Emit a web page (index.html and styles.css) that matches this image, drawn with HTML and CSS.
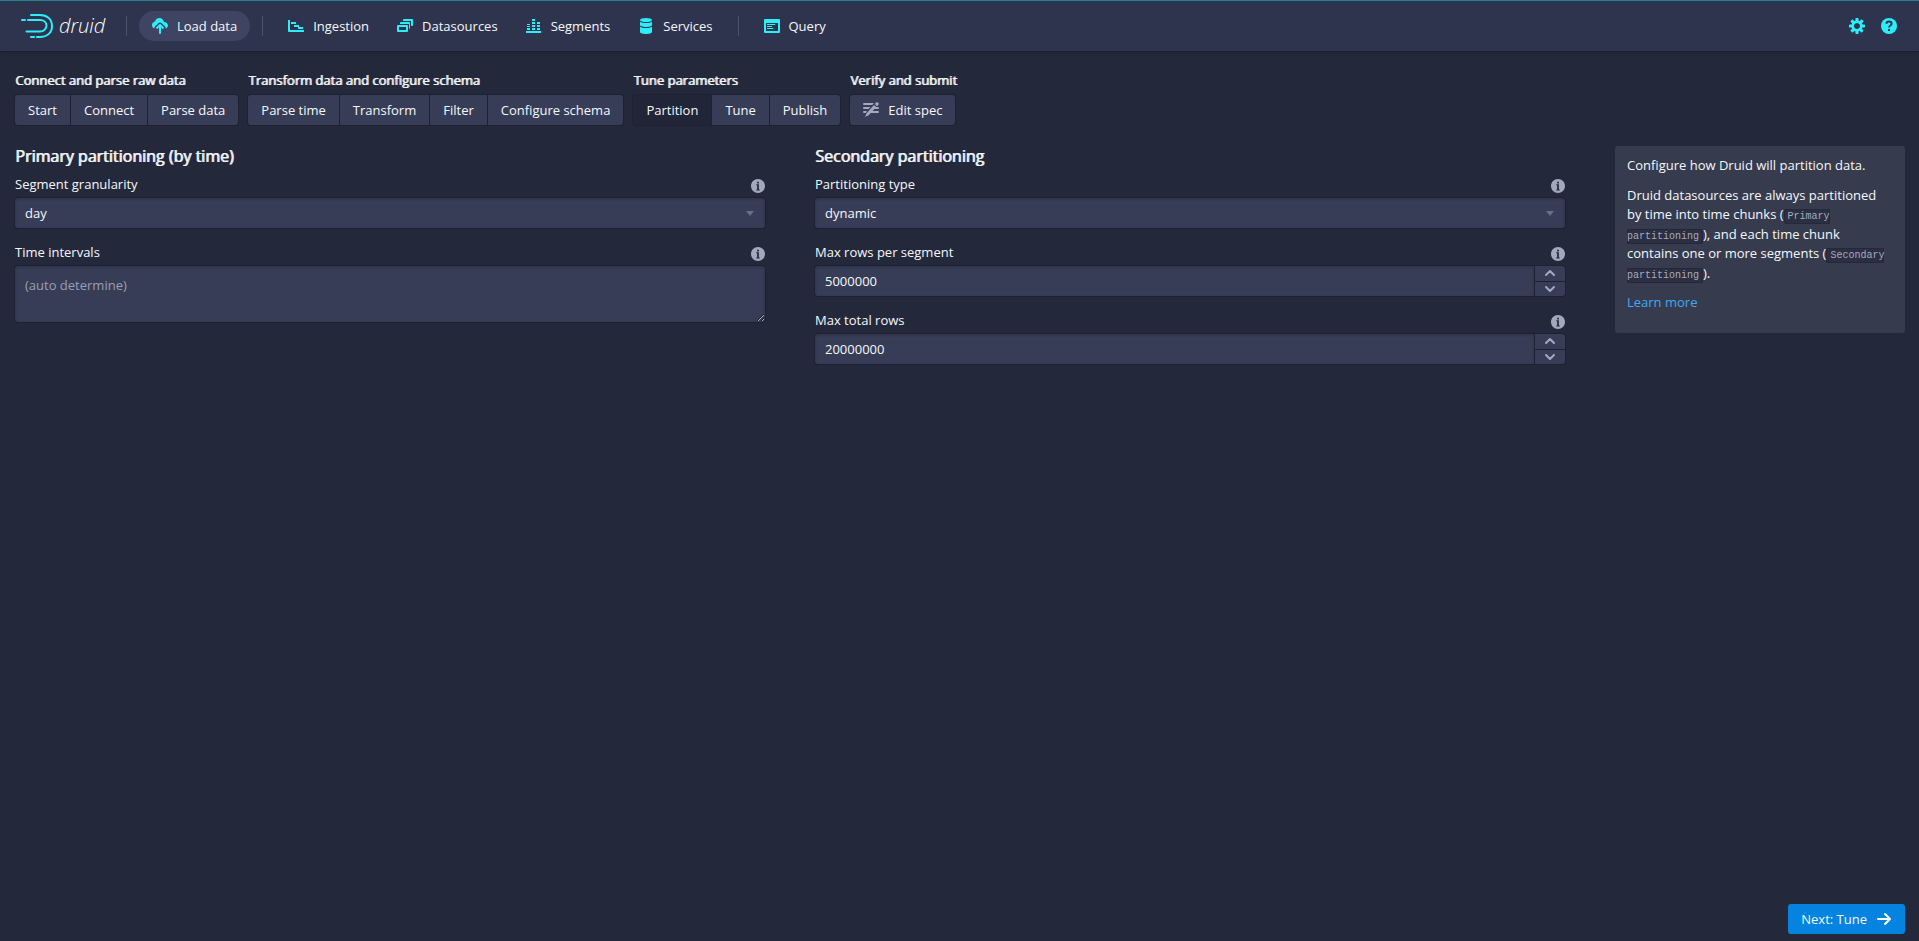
FILE: index.html
```html
<!DOCTYPE html>
<html lang="en">
<head>
<meta charset="utf-8">
<title>Apache Druid</title>
<link rel="stylesheet" href="styles.css">
</head>
<body>
<svg class="sprite" aria-hidden="true">
  <symbol id="info" viewBox="0 0 16 16"><path fill-rule="evenodd" d="M8 0C3.58 0 0 3.58 0 8s3.58 8 8 8 8-3.58 8-8-3.58-8-8-8zM7 3h2v2H7V3zm3 10H6v-1h1V7H6V6h3v6h1v1z"/></symbol>
  <symbol id="caret" viewBox="0 0 16 16"><path d="M4 6h8L8 11z"/></symbol>
  <symbol id="chev-up" viewBox="0 0 16 16"><path d="M4 10l4-4 4 4" fill="none" stroke="currentColor" stroke-width="2" stroke-linecap="round" stroke-linejoin="round"/></symbol>
  <symbol id="chev-down" viewBox="0 0 16 16"><path d="M4 6l4 4 4-4" fill="none" stroke="currentColor" stroke-width="2" stroke-linecap="round" stroke-linejoin="round"/></symbol>
</svg>

<header class="header">
  <a class="logo" href="#" aria-label="Druid home">
    <svg width="34" height="26" viewBox="0 0 34 26" fill="none" stroke="#2ceefb" stroke-width="2" stroke-linecap="round"><path d="M11 2h9c7 0 12 4 12 11s-5 11-12 11h-3M11 24h3M2 7h3M8 7h12c4 0 6.500 2.500 6.500 5.500s-2.500 6-6.500 6H6.500"/></svg>
    <span class="wordmark">druid</span>
  </a>
  <span class="divider"></span>
  <nav class="nav">
    <a class="nav-item current" href="#"><svg class="icon" viewBox="0 0 16 16"><path d="M8.700 6.300a1 1 0 0 0-1.400 0l-3 3a1 1 0 0 0 1.400 1.400L7 9.400V15a1 1 0 0 0 2 0V9.400l1.300 1.300a1 1 0 0 0 1.400-1.400z"/><path d="M12 4h-.100C11.500 1.700 9.900 0 7.500 0 5.200 0 3.400 1.500 3 3.600 1.300 4 0 5.400 0 7.200 0 8.700.9 9.900 2.200 10.500c0-.8.300-1.500.8-2l3-3a2.800 2.800 0 0 1 4 0l3 3c.5.500.8 1.200.8 1.900C15.100 9.900 16 9 16 7.800 16 5.700 14.200 4 12 4z"/></svg>Load data</a>
    <span class="divider"></span>
    <a class="nav-item" href="#"><svg class="icon" viewBox="0 0 16 16"><path d="M0 2h2v10h14v2H1a1 1 0 0 1-1-1zM3 4h5v2H3zM6 7h5v2H6zM10 9h5v2h-5z"/></svg>Ingestion</a>
    <a class="nav-item" href="#"><svg class="icon" viewBox="0 0 16 16"><path fill-rule="evenodd" d="M1 7h9a1 1 0 0 1 1 1v5a1 1 0 0 1-1 1H1a1 1 0 0 1-1-1V8a1 1 0 0 1 1-1zm1 2v3h7V9zM3 6V5a1 1 0 0 1 1-1h8a1 1 0 0 1 1 1v5a1 1 0 0 1-1 1V6zM6 3V2a1 1 0 0 1 1-1h8a1 1 0 0 1 1 1v5a1 1 0 0 1-1 1h-1V3z"/></svg>Datasources</a>
    <a class="nav-item" href="#"><svg class="icon" viewBox="0 0 16 16"><path d="M0 13h15v2H0zM1 10h3v2H1zM1 8h3v1H1zM1 6h3v1H1zM6 10h3v2H6zM6 7h3v2H6zM6 4h3v2H6zM6 1h3v2H6zM11 10h3v2h-3zM11 7h3v2h-3zM11 4h3v2h-3z"/></svg>Segments</a>
    <a class="nav-item" href="#"><svg class="icon" viewBox="0 0 16 16"><ellipse cx="8" cy="2" rx="6" ry="2"/><path d="M2 3.500C3 4.600 5.300 5 8 5s5-.4 6-1.500V7c0 1.100-2.700 2-6 2s-6-.9-6-2zM2 8.500C3 9.600 5.300 10 8 10s5-.4 6-1.500V14c0 1.100-2.700 2-6 2s-6-.9-6-2z"/></svg>Services</a>
    <span class="divider"></span>
    <a class="nav-item" href="#"><svg class="icon" viewBox="0 0 16 16"><path fill-rule="evenodd" d="M1 1h14a1 1 0 0 1 1 1v12a1 1 0 0 1-1 1H1a1 1 0 0 1-1-1V2a1 1 0 0 1 1-1zm1 4v8h12V5zM3 6h8v1H3zM3 8h5v1H3zM3 10h6v1H3z"/></svg>Query</a>
  </nav>
  <div class="header-tools">
    <button class="tool" aria-label="Settings"><svg class="icon" viewBox="0 0 16 16"><path d="M15.190 6.390h-1.850c-.11-.37-.27-.71-.45-1.040l1.360-1.360c.31-.31.31-.82 0-1.130l-1.130-1.130c-.31-.31-.82-.31-1.130 0l-1.360 1.360c-.33-.17-.67-.33-1.040-.44V.79c0-.44-.36-.8-.8-.8h-1.600c-.44 0-.8.36-.8.8v1.860c-.39.12-.75.28-1.100.47l-1.300-1.300c-.3-.3-.79-.3-1.090 0L1.820 2.910c-.3.3-.3.79 0 1.090l1.300 1.300c-.2.34-.36.7-.48 1.090H.79c-.44 0-.8.36-.8.8v1.600c0 .44.36.8.8.8h1.850c.11.37.27.71.45 1.040l-1.360 1.360c-.31.31-.31.82 0 1.130l1.130 1.130c.31.31.82.31 1.130 0l1.360-1.360c.33.18.67.33 1.040.44v1.860c0 .44.36.8.8.8h1.600c.44 0 .8-.36.8-.8v-1.860c.39-.12.75-.28 1.100-.47l1.300 1.300c.3.3.79.3 1.090 0l1.090-1.090c.3-.3.3-.79 0-1.090l-1.300-1.300c.19-.35.36-.71.48-1.100h1.850c.44 0 .8-.36.8-.8v-1.600a.816.816 0 0 0-.81-.79zm-7.200 4.600c-1.660 0-3-1.340-3-3s1.340-3 3-3 3 1.340 3 3-1.340 3-3 3z"/></svg></button>
    <button class="tool" aria-label="Help"><svg class="icon" viewBox="0 0 16 16"><circle cx="8" cy="8" r="8"/><path d="M5.500 5.800C5.500 4.300 6.600 3.500 8 3.500s2.600.8 2.600 2.200C10.600 7.400 8 7.600 8 9.600M8 11v2" fill="none" stroke="#2f344e" stroke-width="2"/></svg></button>
  </div>
</header>

<main class="loader">
  <div class="steps">
    <section class="step-group">
      <h2 class="step-title">Connect and parse raw data</h2>
      <div class="buttons"><button class="btn">Start</button><button class="btn">Connect</button><button class="btn">Parse data</button></div>
    </section>
    <section class="step-group">
      <h2 class="step-title">Transform data and configure schema</h2>
      <div class="buttons"><button class="btn">Parse time</button><button class="btn">Transform</button><button class="btn">Filter</button><button class="btn">Configure schema</button></div>
    </section>
    <section class="step-group">
      <h2 class="step-title">Tune parameters</h2>
      <div class="buttons"><button class="btn active">Partition</button><button class="btn">Tune</button><button class="btn">Publish</button></div>
    </section>
    <section class="step-group">
      <h2 class="step-title">Verify and submit</h2>
      <div class="buttons"><button class="btn"><svg class="icon muted" viewBox="0 0 16 16"><path d="M1 1h10L9.200 3H1a1 1 0 0 1 0-2zM1 5h6.500L5.700 7H1a1 1 0 0 1 0-2zM1 9h3l-1.200 2H1a1 1 0 0 1 0-2zM12.300 5H15a1 1 0 0 1 0 2h-4.500zM8.800 9H15a1 1 0 0 1 0 2H7zM3.600 11.300L11 3l2.200 2-7.500 8.300L2 15zM11.800 2.100l1.300-1.500c.5-.5 1.200-.5 1.700-.1l.6.5c.5.500.5 1.200 0 1.700L14 4.200z"/></svg>Edit spec</button></div>
    </section>
  </div>

  <div class="columns">
    <section class="column">
      <h2 class="heading">Primary partitioning (by time)</h2>
      <div class="field">
        <div class="label-row"><label for="gran">Segment granularity</label><button class="info" aria-label="About segment granularity"><svg><use href="#info"/></svg></button></div>
        <div class="select"><select class="control" id="gran"><option>day</option></select><svg class="caret"><use href="#caret"/></svg></div>
      </div>
      <div class="field">
        <div class="label-row"><label for="intervals">Time intervals</label><button class="info" aria-label="About time intervals"><svg><use href="#info"/></svg></button></div>
        <textarea class="control area" id="intervals" placeholder="(auto determine)"></textarea>
      </div>
    </section>

    <section class="column">
      <h2 class="heading">Secondary partitioning</h2>
      <div class="field">
        <div class="label-row"><label for="ptype">Partitioning type</label><button class="info" aria-label="About partitioning type"><svg><use href="#info"/></svg></button></div>
        <div class="select"><select class="control" id="ptype"><option>dynamic</option></select><svg class="caret"><use href="#caret"/></svg></div>
      </div>
      <div class="field">
        <div class="label-row"><label for="maxseg">Max rows per segment</label><button class="info" aria-label="About max rows per segment"><svg><use href="#info"/></svg></button></div>
        <div class="numeric"><input class="control" id="maxseg" type="text" inputmode="numeric" value="5000000"><div class="spin"><button aria-label="Increase"><svg><use href="#chev-up"/></svg></button><button aria-label="Decrease"><svg><use href="#chev-down"/></svg></button></div></div>
      </div>
      <div class="field">
        <div class="label-row"><label for="maxtotal">Max total rows</label><button class="info" aria-label="About max total rows"><svg><use href="#info"/></svg></button></div>
        <div class="numeric"><input class="control" id="maxtotal" type="text" inputmode="numeric" value="20000000"><div class="spin"><button aria-label="Increase"><svg><use href="#chev-up"/></svg></button><button aria-label="Decrease"><svg><use href="#chev-down"/></svg></button></div></div>
      </div>
    </section>

    <aside class="callout">
      <p>Configure how Druid will partition data.</p>
      <p>Druid datasources are always partitioned by time into time chunks (<code>Primary partitioning</code>), and each time chunk contains one or more segments (<code>Secondary partitioning</code>).</p>
      <p><a href="#">Learn more</a></p>
    </aside>
  </div>

  <footer class="footer">
    <button class="btn next">Next: Tune<svg class="icon" viewBox="0 0 16 16"><path d="M2 8h11M9 3l5 5-5 5" fill="none" stroke="#fff" stroke-width="2" stroke-linecap="round" stroke-linejoin="round"/></svg></button>
  </footer>
</main>
</body>
</html>
```

FILE: styles.css
```css
* { box-sizing: border-box; }

body {
  margin: 0;
  min-height: 100vh;
  display: flex;
  flex-direction: column;
  background: #24283b;
  color: #f5f8fa;
  font: 13px/18px "Open Sans", sans-serif;
}

button, input, select, textarea { font: inherit; color: inherit; }
button { border: 0; margin: 0; padding: 0; background: none; cursor: pointer; }
.sprite { display: none; }
.icon { width: 16px; height: 16px; flex: none; fill: currentColor; }

/* Header */
.header {
  display: flex;
  align-items: center;
  height: 51px;
  padding: 0 14px 0 20px;
  border-top: 1px solid #24808f;
  background: #2f344e;
  box-shadow: 0 0 0 1px rgba(16, 22, 26, 0.2), 0 1px 4px rgba(16, 22, 26, 0.4);
}
.logo { display: flex; align-items: center; gap: 5px; width: 95px; color: #fff; text-decoration: none; }
.wordmark { font: italic 300 20px/26px "Open Sans", sans-serif; }
.divider { width: 1px; height: 20px; margin: 0 11px; background: #4c5069; }
.nav { display: flex; align-items: center; }
.nav-item {
  display: flex;
  align-items: center;
  gap: 9px;
  height: 30px;
  margin: 0 1px;
  padding: 0 13px;
  border-radius: 15px;
  color: #f5f8fa;
  text-decoration: none;
}
.nav-item.current { background: #404463; }
.nav-item .icon, .tool { color: #2ceefb; }
.header-tools { display: flex; margin-left: auto; }
.tool { display: flex; padding: 7px 8px; }

/* Steps */
.loader { flex: 1; display: flex; flex-direction: column; padding: 20px 14px 7px 15px; }
.steps { display: flex; gap: 10px; }
.step-title, .heading { margin: 0; font-weight: 400; white-space: nowrap; text-shadow: 1px 0 0 rgba(245, 248, 250, 0.9); }
.step-title { margin-bottom: 6px; font-size: 13px; line-height: 18px; }
.buttons { display: flex; gap: 1px; }
.btn {
  display: flex;
  align-items: center;
  gap: 9px;
  height: 30px;
  padding: 0 13px;
  background: #383d57;
  box-shadow: 0 0 0 1px #1d2133;
  white-space: nowrap;
}
.btn:first-child { border-top-left-radius: 3px; border-bottom-left-radius: 3px; }
.btn:last-child { border-top-right-radius: 3px; border-bottom-right-radius: 3px; }
.btn.active { background: #212538; }
.muted { color: #a3a8bf; }

/* Form */
.columns {
  display: grid;
  grid-template-columns: minmax(0, 1fr) minmax(0, 1fr) 290px;
  gap: 50px;
  align-items: start;
  margin-top: 21px;
}
.heading { margin-bottom: 9px; font-size: 16px; line-height: 20px; }
.field { margin-bottom: 15px; }
.label-row { display: flex; justify-content: space-between; align-items: flex-end; height: 18px; margin-bottom: 5px; }
.info { display: flex; color: #a3a8bf; }
.info svg { width: 14px; height: 14px; fill: currentColor; }
.control {
  display: block;
  width: 100%;
  height: 30px;
  padding: 0 10px;
  border: 0;
  border-radius: 3px;
  outline: 0;
  background: #383d57;
  box-shadow: 0 0 0 1px #1d2133, inset 0 1px 3px rgba(16, 22, 26, 0.3);
  appearance: none;
}
.area { height: 56px; padding: 10px; resize: vertical; }
.area::placeholder { color: #9a9eb3; opacity: 1; }
.select { position: relative; }
.caret { position: absolute; right: 7px; top: 7px; width: 16px; height: 16px; fill: #686d88; pointer-events: none; }
.numeric { display: flex; gap: 1px; }
.numeric .control { flex: 1; border-radius: 3px 0 0 3px; }
.spin { display: flex; flex-direction: column; gap: 1px; width: 30px; height: 30px; }
.spin button {
  flex: 1;
  display: flex;
  align-items: center;
  justify-content: center;
  overflow: hidden;
  background: #383d57;
  box-shadow: 0 0 0 1px #1d2133;
  color: #a3a8bf;
}
.spin button:first-child { border-top-right-radius: 3px; }
.spin button:last-child { border-bottom-right-radius: 3px; }
.spin svg { width: 16px; height: 16px; flex: none; }

/* Help panel */
.callout { padding: 10px 12px; border-radius: 3px; background: #373b4e; line-height: 1.5; }
.callout p { margin: 0 0 10px; }
.callout a { color: #3fa9f5; text-decoration: none; }
.callout code {
  padding: 2px 4px;
  border-radius: 3px;
  background: #2b2f41;
  box-shadow: inset 0 0 0 1px #24283a;
  color: #a7abc0;
  font: 10px "Liberation Mono", monospace;
}

.footer { display: flex; justify-content: flex-end; margin-top: auto; }
.btn.next { background: #0484e0; box-shadow: none; border-radius: 3px; }
```
